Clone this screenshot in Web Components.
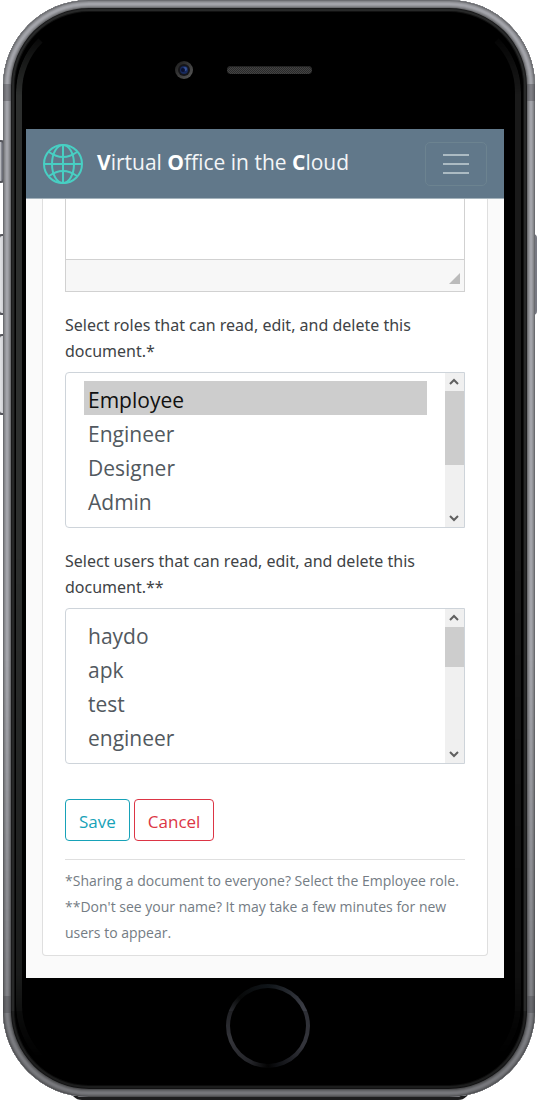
<!DOCTYPE html>
<html lang="en">
<head>
<meta charset="utf-8">
<meta name="viewport" content="width=device-width, initial-scale=1">
<title>Virtual Office in the Cloud</title>
<style>
  body { margin: 0; background: #fff; font-family: "Open Sans", "Noto Sans", sans-serif; color: #404346; }
</style>
</head>
<body>
<phone-frame>
  <app-navbar><b>V</b>irtual <b>O</b>ffice in the <b>C</b>loud</app-navbar>
  <document-card>
    <rich-editor></rich-editor>
    <list-picker name="roles" label="Select roles that can read, edit, and delete this document.*" options="Employee,Engineer,Designer,Admin" selected="Employee" thumb="63"></list-picker>
    <list-picker name="users" label="Select users that can read, edit, and delete this document.**" options="haydo,apk,test,engineer" thumb="34"></list-picker>
    <form-actions>
      <outline-button tone="info">Save</outline-button>
      <outline-button tone="danger">Cancel</outline-button>
    </form-actions>
    <foot-notes>
      <span>*Sharing a document to everyone? Select the Employee role.</span>
      <span>**Don't see your name? It may take a few minutes for new users to appear.</span>
    </foot-notes>
  </document-card>
</phone-frame>

<script>
const define = (name, html, setup) => customElements.define(name, class extends HTMLElement {
  constructor() {
    super();
    this.attachShadow({ mode: 'open' });
  }
  connectedCallback() {
    this.shadowRoot.innerHTML = html;
    if (setup) setup(this, this.shadowRoot);
  }
});

define('phone-frame', `
<style>
  :host { display: block; position: relative; padding: 0 3px 3px; overflow: hidden; }
  .key { position: absolute; box-sizing: border-box; width: 10px; border: 2px solid #55565c; border-radius: 4px;
    background: linear-gradient(90deg, #e2e3e6, #d0d1d5 3px, #6c6e78 5px); }
  .left { left: -2px; }
  .mute { top: 140px; height: 43px; left: -5px; }
  .up { top: 234px; height: 81px; }
  .down { top: 334px; height: 81px; }
  .power { top: 234px; height: 81px; right: 1px; border-color: #777982; background: #a9abb2; }
  .plate { position: absolute; left: 70px; right: 68px; bottom: 0; height: 12px; border-radius: 0 0 12px 12px; background: #1d1d1e; }
  .body { position: relative; border-radius: 86px; background: #000; padding: 0 31px 0 23px;
    box-shadow: inset 0 0 0 1px #6b6c70, inset 0 0 0 2px #85868a, inset 0 0 0 3px #96979c, inset 0 0 0 5px #a3a4aa, inset 0 0 0 6px #97989d, inset 0 0 0 7px #85868a, inset 0 0 0 8px #6c6d70, inset 0 0 0 9px #1a1a1b, inset 0 0 0 11px #272828, inset 0 0 0 12px #111; }
  .glare { position: absolute; inset: 16px 14px 16px 13px; box-sizing: border-box; border: 6px solid transparent; border-left-color: #2d2f2e;
    border-right-color: #191919; border-radius: 76px; pointer-events: none;
    -webkit-mask: linear-gradient(transparent 10px, #000 80px, #000 50%, rgba(0,0,0,.6) 90%, transparent 98%);
    mask: linear-gradient(transparent 10px, #000 80px, #000 50%, rgba(0,0,0,.6) 90%, transparent 98%); }
  .shade { position: absolute; inset: 0; border-radius: 86px; pointer-events: none; background: linear-gradient(transparent 60%, rgba(0,0,0,.28));
    -webkit-mask: linear-gradient(#000,#000) left/8px 100% no-repeat, linear-gradient(#000,#000) right/8px 100% no-repeat, linear-gradient(#000,#000) bottom/100% 86px no-repeat; }
  .band { position: absolute; width: 8px; height: 17px; background: rgba(70,71,76,.4); }
  .band.l { left: 0; }
  .band.r { right: 0; }
  .band.t { top: 84px; }
  .band.b { bottom: 84px; }
  .top { height: 129px; margin-right: -8px; display: grid; grid-template-columns: 1fr 85px 1fr; column-gap: 34px; align-items: center; padding-top: 11px; box-sizing: border-box; }
  .top svg { justify-self: end; display: block; }
  .speaker { height: 8px; border-radius: 4px; background: repeating-conic-gradient(#2a2a2a 0 25%, #434343 0 50%) 0 0 / 2px 2px; box-shadow: inset 0 1px 0 #222; }
  .screen { position: relative; background: #fafafa; overflow: hidden; }
  .bottom { height: 119px; margin-right: -8px; padding-right: 2px; padding-top: 6px; box-sizing: border-box; display: flex; justify-content: center; }
  .home { appearance: none; box-sizing: border-box; width: 84px; height: 84px; padding: 4px; border: 0; border-radius: 50%;
    background: conic-gradient(#0f1418, #3a3c44 60deg, #45464f 120deg, #15171c 165deg, #050505 180deg, #2f3036 205deg, #45464d 250deg, #2a2b30 290deg, #070808 315deg, #0f1418); }
  .home span { display: block; height: 100%; border-radius: 50%; background: #000; }
</style>
<i class="key left mute"></i><i class="key left up"></i><i class="key left down"></i><i class="key power"></i><i class="plate"></i>
<div class="body">
  <div class="glare"></div>
  <div class="top">
    <svg width="18" height="18" viewBox="0 0 18 18" aria-hidden="true">
      <defs><linearGradient id="rim" x1="0" y1="0" x2="1" y2="1"><stop offset="0" stop-color="#191919"/><stop offset="1" stop-color="#5c5c5c"/></linearGradient></defs>
      <circle cx="9" cy="9" r="9" fill="url(#rim)"/><circle cx="9" cy="9" r="6" fill="#151519"/>
      <circle cx="9" cy="9" r="4" fill="#17295c"/><circle cx="10" cy="8" r="2" fill="#375398"/><circle cx="8" cy="9" r="2" fill="#0b1130"/>
    </svg>
    <div class="speaker"></div>
  </div>
  <main class="screen"><slot></slot></main>
  <div class="bottom"><button class="home" type="button" aria-label="Home"><span></span></button></div>
  <div class="shade"></div>
  <i class="band l t"></i><i class="band r t"></i><i class="band l b"></i><i class="band r b"></i>
</div>`);

define('app-navbar', `
<style>
  :host { display: flex; align-items: center; box-sizing: border-box; height: 70px; padding: 0 17px; background: #61788a; border-bottom: 1px solid #a4b3bc; }
  svg { display: block; }
  a { display: flex; align-items: center; gap: 14px; flex: 1; color: #f3f5f7; text-decoration: none; font-size: 21px; line-height: 32px; }
  a span { white-space: nowrap; padding-bottom: 4px; }
  ::slotted(b) { font-weight: 700; color: #fff; }
  button { box-sizing: border-box; width: 62px; height: 44px; padding: 0; display: grid; place-items: center; background: none; border: 1px solid #6c8390; border-radius: 5px; }
</style>
<a href="#">
  <svg width="40" height="40" viewBox="0 0 40 40" fill="none" stroke="#48cfc3" stroke-width="2" aria-hidden="true">
    <circle cx="20" cy="20" r="19"/><path d="M20 1v38M1 20h38"/><ellipse cx="20" cy="20" rx="11" ry="19"/>
    <path d="M6 8Q20 18 34 8M6 32Q20 22 34 32"/>
  </svg>
  <span><slot></slot></span>
</a>
<button type="button" aria-label="Toggle navigation">
  <svg width="26" height="20" viewBox="0 0 26 20" stroke="#acbbc3" stroke-width="2" aria-hidden="true"><path d="M0 1h26M0 10h26M0 19h26"/></svg>
</button>`);

define('document-card', `
<style>
  :host { display: block; margin: 0 16px 22px; padding: 0 22px 9px; background: #fff; border: 1px solid #dfdfdf; border-top: 0; border-radius: 0 0 4px 4px; }
</style><slot></slot>`);

define('rich-editor', `
<style>
  :host { display: block; box-sizing: border-box; border: 1px solid #d1d1d1; border-top: 0; }
  textarea { display: block; box-sizing: border-box; width: 100%; height: 60px; padding: 8px; border: 0; background: #fff; resize: none; outline: 0; font: 16px "Open Sans", sans-serif; }
  footer { display: flex; justify-content: flex-end; align-items: flex-end; box-sizing: border-box; height: 32px; padding: 0 4px 7px; background: #f7f7f7; border-top: 1px solid #d1d1d1; }
</style>
<textarea aria-label="Document text"></textarea>
<footer><svg width="11" height="11" aria-hidden="true"><path d="M11 0v11H0z" fill="#bbb"/></svg></footer>`);

define('list-picker', `
<style>
  :host { display: block; margin-top: 20px; }
  label { display: block; padding-right: 16px; font: 16px/26px "Noto Sans", "Open Sans", sans-serif; }
  .box { display: flex; box-sizing: border-box; height: 156px; margin-top: 8px; border: 1px solid #ced4da; border-radius: 4px 0 0 4px; background: #fff; }
  select { flex: 1; min-width: 0; box-sizing: border-box; height: 154px; margin: 0; padding: 8px 18px; border: 0; outline: 0; background: none; scrollbar-width: none; font: 21px "Open Sans", "Noto Sans", sans-serif; color: #495057; overflow: hidden; }
  option { box-sizing: border-box; height: 34px; min-height: 0; padding: 5px 4px 0; line-height: 30px; color: #525960; }
  option:checked { background: #cdcdcd linear-gradient(#cdcdcd, #cdcdcd); color: #101010; }
  .bar { width: 19px; display: flex; flex-direction: column; background: #f0f0f0; }
  .bar svg { display: block; flex: none; }
  .track { flex: 1; }
  .track i { display: block; background: #cdcdcd; }
</style>
<label for="list"></label>
<div class="box">
  <select id="list" multiple size="4"></select>
  <div class="bar" aria-hidden="true">
    <svg width="19" height="18" fill="none" stroke="#606060" stroke-width="2"><path d="M5 11l4-4 4 4"/></svg>
    <div class="track"><i></i></div>
    <svg width="19" height="18" fill="none" stroke="#606060" stroke-width="2"><path d="M5 7l4 4 4-4"/></svg>
  </div>
</div>`, (host, root) => {
  root.querySelector('label').textContent = host.getAttribute('label');
  const select = root.querySelector('select');
  select.name = host.getAttribute('name');
  for (const text of host.getAttribute('options').split(',')) {
    select.add(new Option(text, text, false, text === host.getAttribute('selected')));
  }
  root.querySelector('.track i').style.height = host.getAttribute('thumb') + '%';
});

define('form-actions', `
<style>:host { display: flex; gap: 4px; margin-top: 35px; padding-bottom: 18px; border-bottom: 1px solid #dfdfdf; }</style><slot></slot>`);

define('outline-button', `
<style>
  :host { display: block; --tone: #17a2b8; }
  :host([tone="danger"]) { --tone: #dc3545; }
  button { box-sizing: border-box; height: 42px; padding: 3px 13px 0; border: 1px solid var(--tone); border-radius: 4px; background: #fff; color: var(--tone); font: 17px/26px "Open Sans", "Noto Sans", sans-serif; }
</style><button type="button"><slot></slot></button>`);

define('foot-notes', `
<style>
  :host { display: block; margin-top: 8px; font: 14px/26px "Open Sans", "Noto Sans", sans-serif; color: #747c84; }
  ::slotted(span) { display: block; }
</style><slot></slot>`);
</script>
</body>
</html>
